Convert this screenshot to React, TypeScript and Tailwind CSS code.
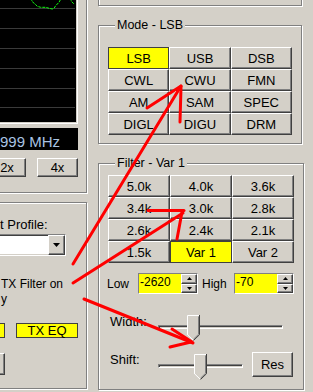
import React from 'react';

const raised =
  'border border-t-white border-l-white border-r-[#404040] border-b-[#404040] shadow-[inset_-1px_-1px_0_#808080] bg-[#d4d0c8]';
const checked = 'border border-[#404040] bg-[#ffff00]';
const etched = 'border border-[#808080] shadow-[inset_1px_1px_0_#fff,1px_1px_0_#fff]';
const sunken =
  'border border-t-[#808080] border-l-[#808080] border-r-white border-b-white shadow-[inset_1px_1px_0_#404040,inset_-1px_-1px_0_#d4d0c8]';

const modes = ['LSB', 'USB', 'DSB', 'CWL', 'CWU', 'FMN', 'AM', 'SAM', 'SPEC', 'DIGL', 'DIGU', 'DRM'];
const filters = ['5.0k', '4.0k', '3.6k', '3.4k', '3.0k', '2.8k', '2.6k', '2.4k', '2.1k', '1.5k', 'Var 1', 'Var 2'];

const ButtonGrid: React.FC<{ items: string[]; active: string; className?: string }> = ({ items, active, className }) => (
  <div className={`grid grid-cols-3 auto-rows-[22px] ${className ?? ''}`}>
    {items.map((m) => (
      <div
        key={m}
        className={`flex items-center justify-center text-[13px] leading-none ${m === active ? checked : raised}`}
      >
        {m}
      </div>
    ))}
  </div>
);

const Thumb: React.FC = () => (
  <svg width="13" height="26" viewBox="0 0 13 26">
    <polygon points="0,0 13,0 13,20 6.5,26 0,20" fill="#d4d0c8" />
    <polyline points="0.5,20 0.5,0.5 12,0.5" stroke="#fff" fill="none" />
    <polyline points="0.5,19.7 6.5,25.5" stroke="#fff" fill="none" />
    <polyline points="12.5,0 12.5,19.7 6.5,25.5" stroke="#404040" fill="none" />
    <polyline points="11.5,1.5 11.5,19.3 6.5,24.2" stroke="#808080" fill="none" />
  </svg>
);

const Spin: React.FC<{ value: string }> = ({ value }) => (
  <div className={`${sunken} flex w-[60px] h-[21px] bg-[#d4d0c8]`}>
    <div className="flex-1 bg-[#ffff00] text-[12px] leading-[17px] pl-[1px]">{value}</div>
    <div className="flex flex-col w-[16px]">
      <div className={`${raised} flex-1 flex items-center justify-center`}>
        <svg width="5" height="3" viewBox="0 0 5 3"><polygon points="2.5,0 5,3 0,3" fill="#000" /></svg>
      </div>
      <div className={`${raised} flex-1 flex items-center justify-center`}>
        <svg width="5" height="3" viewBox="0 0 5 3"><polygon points="0,0 5,0 2.5,3" fill="#000" /></svg>
      </div>
    </div>
  </div>
);

export default function App() {
  return (
    <div className="relative flex w-[313px] h-[392px] overflow-hidden bg-[#d4d0c8] text-black font-['Liberation_Sans',Arial,sans-serif]">
      {/* left column */}
      <div className="w-[87px] shrink-0 flex flex-col">
        <div className={`${etched} -ml-[10px] -mt-[10px] w-[97px] h-[203px] pl-[5px] pt-[5px] shrink-0`}>
          <div className={`${sunken} w-[82px] h-[128px] bg-black`}>
            <svg width="78" height="124" viewBox="0 0 78 124">
              <g transform="translate(2,2)">
                {[9, 29, 49, 69, 89, 108].map((y) => (
                  <line key={y} x1="0" y1={y + 0.5} x2="76" y2={y + 0.5} stroke="#3a3a3a" />
                ))}
                <polyline
                  points="31.7,-1 33.3,2.7 36,5 38.3,7.3 41.7,8.3 46.7,8.3 50,9.3 53.3,10 55,9.3 56.7,6.7 60,3.3 62.3,-1"
                  stroke="#10ff10"
                  strokeDasharray="3 1"
                  fill="none"
                />
                <polyline points="71,-1 72.7,2.7 75,5" stroke="#10ff10" strokeDasharray="3 1" fill="none" />
              </g>
            </svg>
          </div>
          <div className="mt-[4px] w-[82px] h-[22px] bg-black pl-[4px] pt-[2px] overflow-hidden">
            <span className="whitespace-nowrap text-[15px] leading-[18px] text-[#a9c3e3]">999 MHz</span>
          </div>
          <div className="mt-[8px] -ml-[8px] flex gap-[11px]">
            <div className={`${raised} w-[38px] h-[19px] flex items-center justify-center text-[13px] leading-none`}>2x</div>
            <div className={`${raised} w-[41px] h-[19px] flex items-center justify-center text-[13px] leading-none`}>4x</div>
          </div>
        </div>

        <div className={`${etched} mt-[9px] -ml-[10px] w-[97px] h-[187px] pl-[5px] pt-[14px] shrink-0`}>
          <div className="pl-[4px] text-[13px] leading-[15px] whitespace-nowrap">t Profile:</div>
          <div className={`${sunken} mt-[2px] w-[70px] h-[22px] bg-white flex justify-end`}>
            <div className={`${raised} w-[17px] h-full flex items-center justify-center`}>
              <svg width="7" height="4" viewBox="0 0 7 4"><polygon points="0,0 7,0 3.5,4" fill="#000" /></svg>
            </div>
          </div>
          <div className="mt-[21px] pl-[5px] text-[12px] leading-[15px] whitespace-nowrap">
            <div>TX Filter on</div>
            <div>y</div>
          </div>
          <div className="mt-[16px] flex gap-[11px]">
            <div className={`${checked} w-[9px] h-[15px]`} />
            <div className={`${checked} w-[62px] h-[15px] flex items-center justify-center text-[13px] leading-none`}>TX EQ</div>
          </div>
          <div className={`${raised} mt-[15px] w-[9px] h-[22px]`} />
        </div>
      </div>

      {/* right column */}
      <div className="ml-[11px] w-[204px] shrink-0 flex flex-col">
        <div className={`${etched} -mt-[10px] h-[16px] shrink-0`} />

        <fieldset className={`${etched} mt-[11px] h-[127px] px-[9px] shrink-0`}>
          <legend className="ml-[7px] px-[2px] bg-[#d4d0c8] text-[12.5px] leading-[16px]">Mode - LSB</legend>
          <ButtonGrid items={modes} active="LSB" className="mt-[14px]" />
        </fieldset>

        <fieldset className={`${etched} mt-[11px] h-[235px] px-[9px] shrink-0`}>
          <legend className="ml-[7px] px-[2px] bg-[#d4d0c8] text-[12.5px] leading-[16px]">Filter - Var 1</legend>
          <ButtonGrid items={filters} active="Var 1" className="mt-[4px]" />

          <div className="mt-[10px] -ml-[1px] flex items-center h-[21px] text-[12px]">
            <span className="w-[31px]">Low</span>
            <Spin value="-2620" />
            <span className="w-[36px] pl-[4px]">High</span>
            <Spin value="-70" />
          </div>

          <div className="mt-[21px] ml-[2px] flex items-start h-[26px]">
            <span className="w-[48px] -mt-[1px] text-[13px] leading-[15px]">Width:</span>
            <div className="relative w-[125px] h-[26px]">
              <div className={`${sunken} mt-[10px] h-[4px]`} />
              <div className="absolute left-[29px] top-0">
                <Thumb />
              </div>
            </div>
          </div>

          <div className="mt-[11px] ml-[2px] flex items-start h-[25px]">
            <span className="w-[48px] text-[13px] leading-[15px]">Shift:</span>
            <div className="relative w-[85px] h-[28px]">
              <div className={`${sunken} mt-[12px] h-[4px]`} />
              <div className="absolute left-[36px] top-[2px]">
                <Thumb />
              </div>
            </div>
            <div className={`${raised} ml-[9px] w-[41px] h-[25px] flex items-center justify-center text-[13px] leading-none`}>Res</div>
          </div>
        </fieldset>
      </div>

      {/* red annotation arrows */}
      <svg className="absolute left-0 top-0 pointer-events-none" width="313" height="392" viewBox="0 0 313 392">
        <g stroke="#ff0000" strokeWidth="3" strokeLinecap="round" fill="none">
          <path d="M73 264 L181 86" />
          <path d="M147 108 L181 86" />
          <path d="M180 122 L181 87" />
          <path d="M73 283 L183 213" />
          <path d="M148 210.5 L184 210.5" />
          <path d="M177 239 L182 212" />
          <path d="M84 299 L193 343" />
          <path d="M172 329 L192 342" />
          <path d="M170 347 L191 342" />
        </g>
      </svg>
    </div>
  );
}
